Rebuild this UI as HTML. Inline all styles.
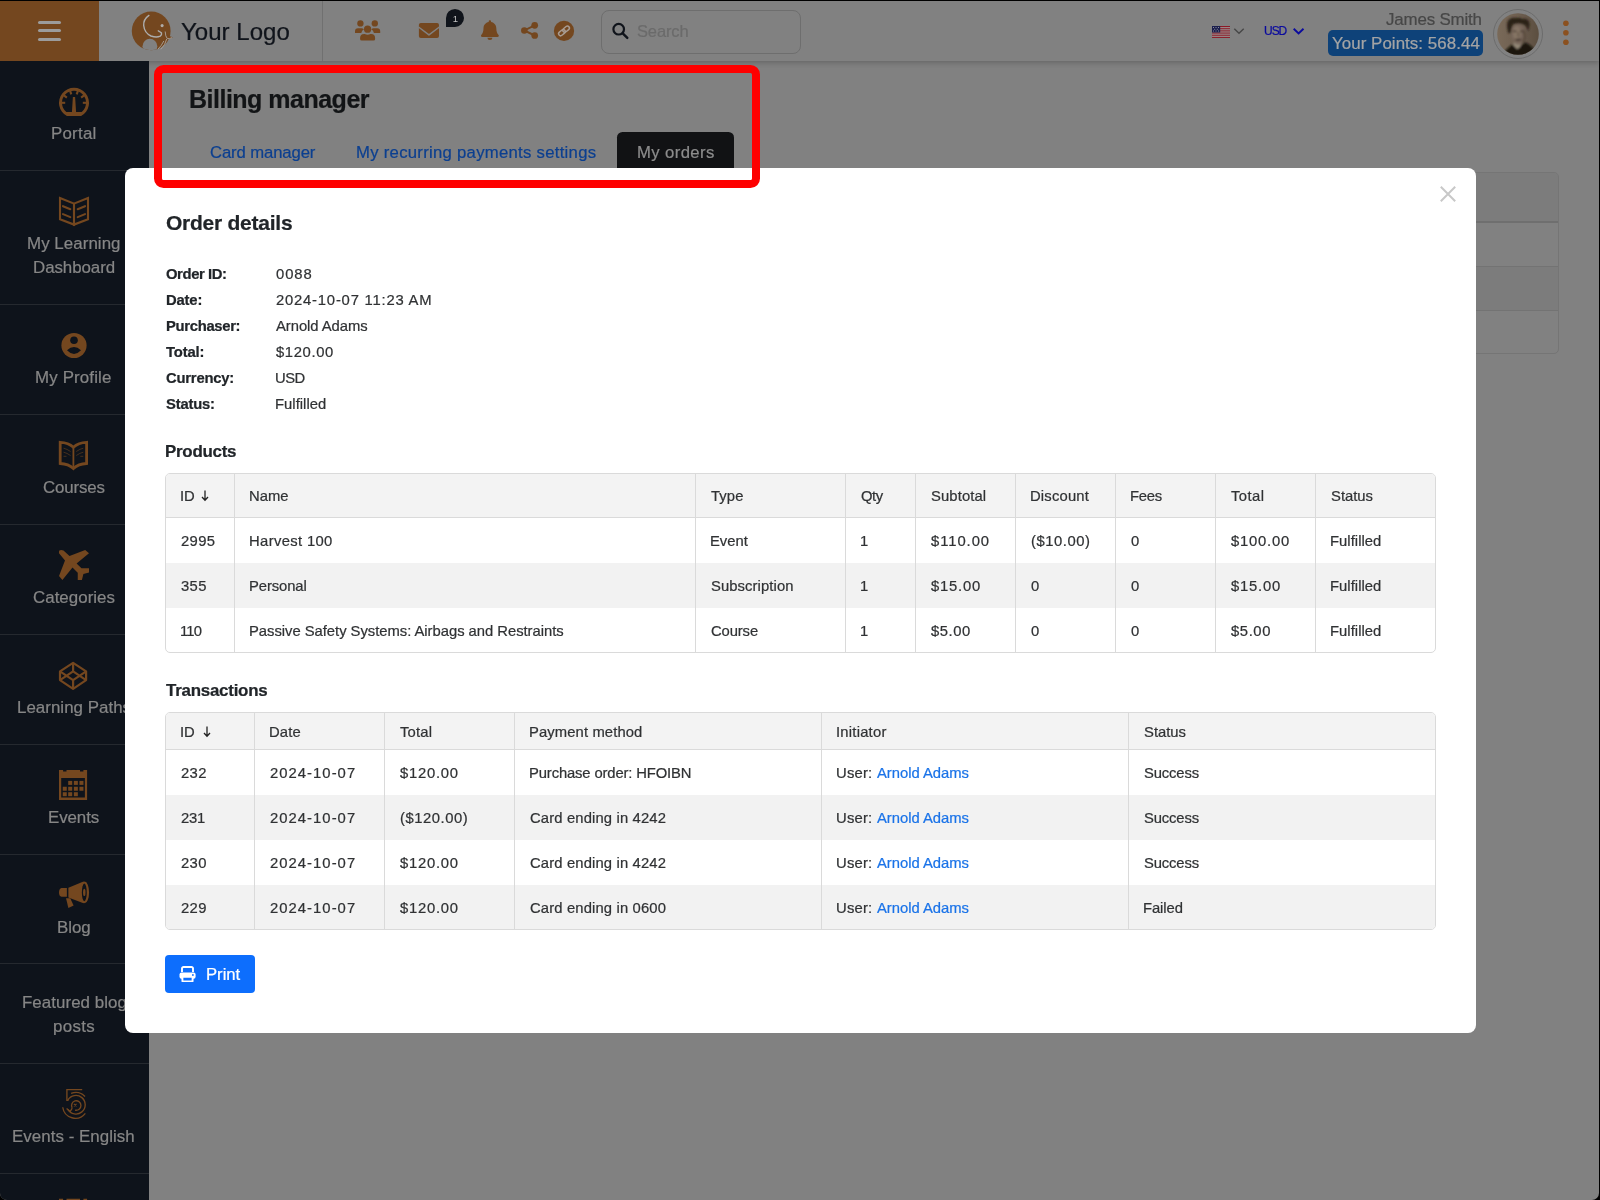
<!DOCTYPE html>
<html lang="en">
<head>
<meta charset="utf-8">
<title>Billing manager - Order details</title>
<style>
*{box-sizing:border-box;margin:0;padding:0}
html,body{width:1600px;height:1200px;overflow:hidden;background:#000}
body{font-family:"Liberation Sans",sans-serif;position:relative}
#frame{position:absolute;left:0;top:1px;width:1599px;height:1199px;background:#818181;overflow:hidden;border-radius:0 0 7px 7px}
.t{position:absolute;white-space:nowrap;line-height:20px;display:block;will-change:transform;-webkit-text-stroke:0.22px currentColor}
</style>
</head>
<body>
<div id="frame">
<!-- header -->
<div style="position:absolute;left:0px;top:0px;width:1599px;height:60px;background:#818181;box-shadow:0 2px 5px rgba(0,0,0,.2)"></div>
<div style="position:absolute;left:0px;top:0px;width:99px;height:60px;background:#74471f"></div>
<div style="position:absolute;left:37.5px;top:20px;width:23.5px;height:3px;background:#9c9c9c;border-radius:1.5px"></div>
<div style="position:absolute;left:37.5px;top:28.2px;width:23.5px;height:3px;background:#9c9c9c;border-radius:1.5px"></div>
<div style="position:absolute;left:37.5px;top:36.6px;width:23.5px;height:3px;background:#9c9c9c;border-radius:1.5px"></div>
<div style="position:absolute;left:321.5px;top:0px;width:1px;height:60px;background:#707070"></div>
<span class="t" id="logo" style="left:180.6px;top:16px;font-size:24px;line-height:30px;letter-spacing:0.025px;color:#10141b;">Your Logo</span>
<div style="position:absolute;left:601px;top:8.5px;width:200px;height:44px;border:1px solid #6e6e6e;border-radius:8px"></div>
<span class="t" id="search" style="left:636.8px;top:20px;font-size:16.5px;letter-spacing:-0.141px;color:#6b6b6b;">Search</span>
<span class="t" id="usd" style="left:1264.4px;top:20px;font-size:12px;letter-spacing:-1.035px;color:#0a0a9e;">USD</span>
<span class="t" id="uname" style="left:1386.4px;top:9px;font-size:16.9px;letter-spacing:-0.162px;color:#474747;">James Smith</span>
<div style="position:absolute;left:1328px;top:29px;width:155px;height:26px;background:#0e4279;border-radius:5px"></div>
<span class="t" id="pts" style="left:1331.8px;top:33px;font-size:16.9px;letter-spacing:0.055px;color:#a4a4a4;">Your Points: 568.44</span>
<!-- sidebar -->
<div style="position:absolute;left:0px;top:60px;width:149px;height:1139px;background:#0e131b"></div>
<div style="position:absolute;left:0px;top:169px;width:149px;height:1px;background:#25292f"></div>
<div style="position:absolute;left:0px;top:303px;width:149px;height:1px;background:#25292f"></div>
<div style="position:absolute;left:0px;top:413px;width:149px;height:1px;background:#25292f"></div>
<div style="position:absolute;left:0px;top:523px;width:149px;height:1px;background:#25292f"></div>
<div style="position:absolute;left:0px;top:633px;width:149px;height:1px;background:#25292f"></div>
<div style="position:absolute;left:0px;top:743px;width:149px;height:1px;background:#25292f"></div>
<div style="position:absolute;left:0px;top:853px;width:149px;height:1px;background:#25292f"></div>
<div style="position:absolute;left:0px;top:962px;width:149px;height:1px;background:#25292f"></div>
<div style="position:absolute;left:0px;top:1061.5px;width:149px;height:1px;background:#25292f"></div>
<div style="position:absolute;left:0px;top:1172px;width:149px;height:1px;background:#25292f"></div>
<span class="t" id="s1" style="left:51px;top:121px;font-size:16.9px;line-height:24px;letter-spacing:0.226px;color:#868686;">Portal</span>
<span class="t" id="s2a" style="left:27px;top:231px;font-size:16.9px;line-height:24px;letter-spacing:0.055px;color:#868686;">My Learning</span>
<span class="t" id="s2b" style="left:32.7px;top:255px;font-size:16.9px;line-height:24px;letter-spacing:-0.067px;color:#868686;">Dashboard</span>
<span class="t" id="s3" style="left:35px;top:365px;font-size:16.9px;line-height:24px;letter-spacing:0.146px;color:#868686;">My Profile</span>
<span class="t" id="s4" style="left:43px;top:475px;font-size:16.9px;line-height:24px;letter-spacing:-0.158px;color:#868686;">Courses</span>
<span class="t" id="s5" style="left:33px;top:585px;font-size:16.9px;line-height:24px;letter-spacing:0.029px;color:#868686;">Categories</span>
<span class="t" id="s6" style="left:16.7px;top:695px;font-size:16.9px;line-height:24px;letter-spacing:0.032px;color:#868686;">Learning Paths</span>
<span class="t" id="s7" style="left:48px;top:805px;font-size:16.9px;line-height:24px;letter-spacing:-0.078px;color:#868686;">Events</span>
<span class="t" id="s8" style="left:56.8px;top:915px;font-size:16.9px;line-height:24px;letter-spacing:-0.071px;color:#868686;">Blog</span>
<span class="t" id="s9a" style="left:21.6px;top:990px;font-size:16.9px;line-height:24px;letter-spacing:0.055px;color:#868686;">Featured blog</span>
<span class="t" id="s9b" style="left:52.9px;top:1014px;font-size:16.9px;line-height:24px;letter-spacing:0.319px;color:#868686;">posts</span>
<span class="t" id="s10" style="left:12px;top:1124px;font-size:16.9px;line-height:24px;letter-spacing:0.043px;color:#868686;">Events - English</span>
<!-- main -->
<span class="t" id="h1" style="left:188.7px;top:82px;font-size:25px;font-weight:700;line-height:32px;letter-spacing:-0.501px;color:#121416;">Billing manager</span>
<span class="t" id="tab1" style="left:209.7px;top:142px;font-size:16.7px;letter-spacing:-0.119px;color:#0b3f90;">Card manager</span>
<span class="t" id="tab2" style="left:356.3px;top:142px;font-size:16.7px;letter-spacing:0.282px;color:#0b3f90;">My recurring payments settings</span>
<div style="position:absolute;left:617px;top:131px;width:117px;height:40px;background:#111214;border-radius:5.500px 5.500px 0 0"></div>
<span class="t" id="tab3" style="left:636.5px;top:142px;font-size:16.7px;letter-spacing:0.395px;color:#8c8c8c;">My orders</span>
<div style="position:absolute;left:1300px;top:171px;width:259px;height:181.5px;border:1px solid #757575;border-radius:5px;background:#818181;overflow:hidden"><div style="position:absolute;left:0;top:0;width:258px;height:48px;background:#7c7c7c"></div><div style="position:absolute;left:0;top:48px;width:258px;height:2px;background:#6f6f6f"></div><div style="position:absolute;left:0;top:92.600px;width:258px;height:1px;background:#737373"></div><div style="position:absolute;left:0;top:93.600px;width:258px;height:43px;background:#7c7c7c"></div><div style="position:absolute;left:0;top:136.600px;width:258px;height:1px;background:#737373"></div></div>
<!-- modal -->
<div style="position:absolute;left:125px;top:167px;width:1351px;height:865px;background:#fff;border-radius:8px"></div>
<svg width="16" height="16" viewBox="0 0 16 16" style="position:absolute;left:1439.500px;top:185.100px"><path d="M0.800 0.800L15.200 15.200M15.200 0.800L0.800 15.200" stroke="#c8c8c8" stroke-width="2" fill="none"/></svg>
<span class="t" id="od" style="left:165.6px;top:210px;font-size:21px;font-weight:700;line-height:24px;letter-spacing:-0.247px;color:#212529;">Order details</span>
<span class="t" id="dk0" style="left:165.6px;top:263px;font-size:14.8px;font-weight:700;letter-spacing:-0.388px;color:#212529;">Order ID:</span>
<span class="t" id="dv0" style="left:275.5px;top:263px;font-size:14.8px;letter-spacing:0.904px;color:#303234;">0088</span>
<span class="t" id="dk1" style="left:165.6px;top:289px;font-size:14.8px;font-weight:700;letter-spacing:-0.168px;color:#212529;">Date:</span>
<span class="t" id="dv1" style="left:275.5px;top:289px;font-size:14.8px;letter-spacing:0.799px;color:#303234;">2024-10-07 11:23 AM</span>
<span class="t" id="dk2" style="left:165.6px;top:315px;font-size:14.8px;font-weight:700;letter-spacing:-0.309px;color:#212529;">Purchaser:</span>
<span class="t" id="dv2" style="left:275.5px;top:315px;font-size:14.8px;letter-spacing:-0.049px;color:#303234;">Arnold Adams</span>
<span class="t" id="dk3" style="left:165.6px;top:341px;font-size:14.8px;font-weight:700;letter-spacing:-0.129px;color:#212529;">Total:</span>
<span class="t" id="dv3" style="left:275.5px;top:341px;font-size:14.8px;letter-spacing:0.640px;color:#303234;">$120.00</span>
<span class="t" id="dk4" style="left:165.6px;top:367px;font-size:14.8px;font-weight:700;letter-spacing:-0.208px;color:#212529;">Currency:</span>
<span class="t" id="dv4" style="left:274.5px;top:367px;font-size:14.8px;letter-spacing:-0.478px;color:#303234;">USD</span>
<span class="t" id="dk5" style="left:165.6px;top:393px;font-size:14.8px;font-weight:700;letter-spacing:-0.187px;color:#212529;">Status:</span>
<span class="t" id="dv5" style="left:274.5px;top:393px;font-size:14.8px;letter-spacing:0.030px;color:#303234;">Fulfilled</span>
<span class="t" id="hp" style="left:164.6px;top:441px;font-size:16.9px;font-weight:700;letter-spacing:-0.259px;color:#212529;">Products</span>
<span class="t" id="ht" style="left:166px;top:680px;font-size:16.9px;font-weight:700;letter-spacing:-0.228px;color:#212529;">Transactions</span>
<div style="position:absolute;left:165px;top:472px;width:1271px;height:180px;border:1px solid #dadada;border-radius:5px;background:#fff;overflow:hidden"><div style="position:absolute;left:0;top:0;width:1271px;height:43px;background:#f3f3f3"></div><div style="position:absolute;left:0;top:43px;width:1271px;height:1px;background:#dadada"></div><div style="position:absolute;left:0;top:89px;width:1271px;height:45px;background:#f2f2f2"></div><div style="position:absolute;left:68px;top:0;width:1px;height:180px;background:#dadada"></div><div style="position:absolute;left:529px;top:0;width:1px;height:180px;background:#dadada"></div><div style="position:absolute;left:679px;top:0;width:1px;height:180px;background:#dadada"></div><div style="position:absolute;left:749px;top:0;width:1px;height:180px;background:#dadada"></div><div style="position:absolute;left:849px;top:0;width:1px;height:180px;background:#dadada"></div><div style="position:absolute;left:949px;top:0;width:1px;height:180px;background:#dadada"></div><div style="position:absolute;left:1049px;top:0;width:1px;height:180px;background:#dadada"></div><div style="position:absolute;left:1149px;top:0;width:1px;height:180px;background:#dadada"></div></div>
<span class="t" id="ph0" style="left:179.5px;top:485px;font-size:14.8px;letter-spacing:-0.111px;color:#303234;">ID</span>
<span class="t" id="ph1" style="left:249.3px;top:485px;font-size:14.8px;letter-spacing:-0.014px;color:#303234;">Name</span>
<span class="t" id="ph2" style="left:711.3px;top:485px;font-size:14.8px;letter-spacing:0.117px;color:#303234;">Type</span>
<span class="t" id="ph3" style="left:861.3px;top:485px;font-size:14.8px;letter-spacing:-0.410px;color:#303234;">Qty</span>
<span class="t" id="ph4" style="left:931.3px;top:485px;font-size:14.8px;letter-spacing:0.113px;color:#303234;">Subtotal</span>
<span class="t" id="ph5" style="left:1030.3px;top:485px;font-size:14.8px;letter-spacing:0.177px;color:#303234;">Discount</span>
<span class="t" id="ph6" style="left:1130.3px;top:485px;font-size:14.8px;letter-spacing:-0.232px;color:#303234;">Fees</span>
<span class="t" id="ph7" style="left:1231.3px;top:485px;font-size:14.8px;letter-spacing:0.458px;color:#303234;">Total</span>
<span class="t" id="ph8" style="left:1331.3px;top:485px;font-size:14.8px;letter-spacing:0.010px;color:#303234;">Status</span>
<span class="t" id="pr0c0" style="left:180.5px;top:530px;font-size:14.8px;letter-spacing:0.337px;color:#303234;">2995</span>
<span class="t" id="pr0c1" style="left:249.3px;top:530px;font-size:14.8px;letter-spacing:0.355px;color:#303234;">Harvest 100</span>
<span class="t" id="pr0c2" style="left:710.3px;top:530px;font-size:14.8px;letter-spacing:-0.007px;color:#303234;">Event</span>
<span class="t" id="pr0c3" style="left:860.3px;top:530px;font-size:14.8px;color:#303234;">1</span>
<span class="t" id="pr0c4" style="left:931.3px;top:530px;font-size:14.8px;letter-spacing:0.940px;color:#303234;">$110.00</span>
<span class="t" id="pr0c5" style="left:1031.3px;top:530px;font-size:14.8px;letter-spacing:0.545px;color:#303234;">($10.00)</span>
<span class="t" id="pr0c6" style="left:1131.3px;top:530px;font-size:14.8px;color:#303234;">0</span>
<span class="t" id="pr0c7" style="left:1231.3px;top:530px;font-size:14.8px;letter-spacing:0.774px;color:#303234;">$100.00</span>
<span class="t" id="pr0c8" style="left:1330.3px;top:530px;font-size:14.8px;letter-spacing:0.043px;color:#303234;">Fulfilled</span>
<span class="t" id="pr1c0" style="left:180.5px;top:575px;font-size:14.8px;letter-spacing:0.371px;color:#303234;">355</span>
<span class="t" id="pr1c1" style="left:249.3px;top:575px;font-size:14.8px;letter-spacing:-0.088px;color:#303234;">Personal</span>
<span class="t" id="pr1c2" style="left:711.3px;top:575px;font-size:14.8px;letter-spacing:0.091px;color:#303234;">Subscription</span>
<span class="t" id="pr1c3" style="left:860.3px;top:575px;font-size:14.8px;color:#303234;">1</span>
<span class="t" id="pr1c4" style="left:931.3px;top:575px;font-size:14.8px;letter-spacing:0.774px;color:#303234;">$15.00</span>
<span class="t" id="pr1c5" style="left:1031.3px;top:575px;font-size:14.8px;color:#303234;">0</span>
<span class="t" id="pr1c6" style="left:1131.3px;top:575px;font-size:14.8px;color:#303234;">0</span>
<span class="t" id="pr1c7" style="left:1231.3px;top:575px;font-size:14.8px;letter-spacing:0.794px;color:#303234;">$15.00</span>
<span class="t" id="pr1c8" style="left:1330.3px;top:575px;font-size:14.8px;letter-spacing:0.043px;color:#303234;">Fulfilled</span>
<span class="t" id="pr2c0" style="left:179.5px;top:620px;font-size:14.8px;letter-spacing:-0.780px;color:#303234;">110</span>
<span class="t" id="pr2c1" style="left:249.3px;top:620px;font-size:14.8px;letter-spacing:-0.025px;color:#303234;">Passive Safety Systems: Airbags and Restraints</span>
<span class="t" id="pr2c2" style="left:711.3px;top:620px;font-size:14.8px;letter-spacing:-0.114px;color:#303234;">Course</span>
<span class="t" id="pr2c3" style="left:860.3px;top:620px;font-size:14.8px;color:#303234;">1</span>
<span class="t" id="pr2c4" style="left:931.3px;top:620px;font-size:14.8px;letter-spacing:0.575px;color:#303234;">$5.00</span>
<span class="t" id="pr2c5" style="left:1031.3px;top:620px;font-size:14.8px;color:#303234;">0</span>
<span class="t" id="pr2c6" style="left:1131.3px;top:620px;font-size:14.8px;color:#303234;">0</span>
<span class="t" id="pr2c7" style="left:1231.3px;top:620px;font-size:14.8px;letter-spacing:0.600px;color:#303234;">$5.00</span>
<span class="t" id="pr2c8" style="left:1330.3px;top:620px;font-size:14.8px;letter-spacing:0.043px;color:#303234;">Fulfilled</span>
<div style="position:absolute;left:165px;top:711px;width:1271px;height:218px;border:1px solid #dadada;border-radius:5px;background:#fff;overflow:hidden"><div style="position:absolute;left:0;top:0;width:1271px;height:36px;background:#f3f3f3"></div><div style="position:absolute;left:0;top:36px;width:1271px;height:1px;background:#dadada"></div><div style="position:absolute;left:0;top:82px;width:1271px;height:45px;background:#f2f2f2"></div><div style="position:absolute;left:0;top:172px;width:1271px;height:45px;background:#f2f2f2"></div><div style="position:absolute;left:88px;top:0;width:1px;height:218px;background:#dadada"></div><div style="position:absolute;left:218px;top:0;width:1px;height:218px;background:#dadada"></div><div style="position:absolute;left:348px;top:0;width:1px;height:218px;background:#dadada"></div><div style="position:absolute;left:655px;top:0;width:1px;height:218px;background:#dadada"></div><div style="position:absolute;left:962px;top:0;width:1px;height:218px;background:#dadada"></div></div>
<span class="t" id="th0" style="left:179.5px;top:721px;font-size:14.8px;letter-spacing:-0.111px;color:#303234;">ID</span>
<span class="t" id="th1" style="left:269.3px;top:721px;font-size:14.8px;letter-spacing:0.125px;color:#303234;">Date</span>
<span class="t" id="th2" style="left:400.3px;top:721px;font-size:14.8px;letter-spacing:0.183px;color:#303234;">Total</span>
<span class="t" id="th3" style="left:529.3px;top:721px;font-size:14.8px;letter-spacing:0.113px;color:#303234;">Payment method</span>
<span class="t" id="th4" style="left:836.3px;top:721px;font-size:14.8px;letter-spacing:0.226px;color:#303234;">Initiator</span>
<span class="t" id="th5" style="left:1144.3px;top:721px;font-size:14.8px;letter-spacing:0.010px;color:#303234;">Status</span>
<span class="t" id="tr0c0" style="left:180.5px;top:762px;font-size:14.8px;letter-spacing:0.371px;color:#303234;">232</span>
<span class="t" id="tr0c1" style="left:270.3px;top:762px;font-size:14.8px;letter-spacing:1.049px;color:#303234;">2024-10-07</span>
<span class="t" id="tr0c2" style="left:400.3px;top:762px;font-size:14.8px;letter-spacing:0.740px;color:#303234;">$120.00</span>
<span class="t" id="tr0c3" style="left:529.3px;top:762px;font-size:14.8px;letter-spacing:-0.133px;color:#303234;">Purchase order: HFOIBN</span>
<span class="t" id="tr0c4a" style="left:836.3px;top:762px;font-size:14.8px;letter-spacing:0.215px;color:#303234;">User:</span>
<span class="t" id="tr0c4b" style="left:877.3px;top:762px;font-size:14.8px;letter-spacing:-0.022px;color:#1a73e8;">Arnold Adams</span>
<span class="t" id="tr0c5" style="left:1144.3px;top:762px;font-size:14.8px;letter-spacing:-0.137px;color:#303234;">Success</span>
<span class="t" id="tr1c0" style="left:180.5px;top:807px;font-size:14.8px;letter-spacing:-0.229px;color:#303234;">231</span>
<span class="t" id="tr1c1" style="left:270.3px;top:807px;font-size:14.8px;letter-spacing:1.049px;color:#303234;">2024-10-07</span>
<span class="t" id="tr1c2" style="left:400.3px;top:807px;font-size:14.8px;letter-spacing:0.548px;color:#303234;">($120.00)</span>
<span class="t" id="tr1c3" style="left:530.3px;top:807px;font-size:14.8px;letter-spacing:0.148px;color:#303234;">Card ending in 4242</span>
<span class="t" id="tr1c4a" style="left:836.3px;top:807px;font-size:14.8px;letter-spacing:0.215px;color:#303234;">User:</span>
<span class="t" id="tr1c4b" style="left:877.3px;top:807px;font-size:14.8px;letter-spacing:-0.022px;color:#1a73e8;">Arnold Adams</span>
<span class="t" id="tr1c5" style="left:1144.3px;top:807px;font-size:14.8px;letter-spacing:-0.137px;color:#303234;">Success</span>
<span class="t" id="tr2c0" style="left:180.5px;top:852px;font-size:14.8px;letter-spacing:0.371px;color:#303234;">230</span>
<span class="t" id="tr2c1" style="left:270.3px;top:852px;font-size:14.8px;letter-spacing:1.049px;color:#303234;">2024-10-07</span>
<span class="t" id="tr2c2" style="left:400.3px;top:852px;font-size:14.8px;letter-spacing:0.740px;color:#303234;">$120.00</span>
<span class="t" id="tr2c3" style="left:530.3px;top:852px;font-size:14.8px;letter-spacing:0.148px;color:#303234;">Card ending in 4242</span>
<span class="t" id="tr2c4a" style="left:836.3px;top:852px;font-size:14.8px;letter-spacing:0.215px;color:#303234;">User:</span>
<span class="t" id="tr2c4b" style="left:877.3px;top:852px;font-size:14.8px;letter-spacing:-0.022px;color:#1a73e8;">Arnold Adams</span>
<span class="t" id="tr2c5" style="left:1144.3px;top:852px;font-size:14.8px;letter-spacing:-0.137px;color:#303234;">Success</span>
<span class="t" id="tr3c0" style="left:180.5px;top:897px;font-size:14.8px;letter-spacing:0.371px;color:#303234;">229</span>
<span class="t" id="tr3c1" style="left:270.3px;top:897px;font-size:14.8px;letter-spacing:1.049px;color:#303234;">2024-10-07</span>
<span class="t" id="tr3c2" style="left:400.3px;top:897px;font-size:14.8px;letter-spacing:0.740px;color:#303234;">$120.00</span>
<span class="t" id="tr3c3" style="left:530.3px;top:897px;font-size:14.8px;letter-spacing:0.148px;color:#303234;">Card ending in 0600</span>
<span class="t" id="tr3c4a" style="left:836.3px;top:897px;font-size:14.8px;letter-spacing:0.215px;color:#303234;">User:</span>
<span class="t" id="tr3c4b" style="left:877.3px;top:897px;font-size:14.8px;letter-spacing:-0.022px;color:#1a73e8;">Arnold Adams</span>
<span class="t" id="tr3c5" style="left:1143.3px;top:897px;font-size:14.8px;letter-spacing:-0.074px;color:#303234;">Failed</span>
<svg width="8" height="12" viewBox="0 0 8 12" style="position:absolute;left:200.7px;top:489px"><path d="M4 0.500V10M1 7L4 10.300L7 7" fill="none" stroke="#222" stroke-width="1.300"/></svg>
<svg width="8" height="12" viewBox="0 0 8 12" style="position:absolute;left:202.7px;top:724.5px"><path d="M4 0.500V10M1 7L4 10.300L7 7" fill="none" stroke="#222" stroke-width="1.300"/></svg>
<div style="position:absolute;left:165px;top:954px;width:90px;height:38px;background:#0d6efd;border-radius:4px"></div>
<span class="t" id="print" style="left:206px;top:964px;font-size:16.7px;letter-spacing:-0.019px;color:#fff;">Print</span>
<svg width="17" height="17" viewBox="0 0 17 17" style="position:absolute;left:179.400px;top:963.700px"><path d="M3 7V3.500A1.500 1.500 0 0 1 4.500 2H12.500A1.500 1.500 0 0 1 14 3.500V7" fill="none" stroke="#fff" stroke-width="1.900"/><rect x="0.500" y="7.400" width="16.100" height="6.300" rx="2" fill="#fff"/><rect x="3.400" y="11.700" width="10.200" height="4.800" rx="0.600" fill="#0d6efd" stroke="#fff" stroke-width="1.900"/><circle cx="13.900" cy="10" r="0.900" fill="#0d6efd"/></svg>
<svg id="ico" width="1600" height="1200" viewBox="0 0 1600 1200" style="position:absolute;left:0;top:-1px;pointer-events:none">
<g fill="#74471f">
<!-- logo elephant -->
<circle cx="151.200" cy="30.900" r="19.400"/>
<path d="M165 30Q166.500 36 172.800 37.300Q168.500 40.500 165.500 38.500Q163.500 36 163.800 31Z"/>
<!-- users -->
<circle cx="360.4" cy="23.4" r="3.15"/><circle cx="374.8" cy="23.4" r="3.15"/><circle cx="367.6" cy="29.2" r="3.65"/>
<path d="M355 32.9V31.3A3 3 0 0 1 358 28.3H361.5Q363 28.4 363.9 29.3Q361.8 30.6 361.3 32.9Z"/>
<path d="M380.2 32.9V31.3A3 3 0 0 0 377.2 28.3H373.7Q372.2 28.4 371.3 29.3Q373.4 30.6 373.9 32.9Z"/>
<path d="M360.1 38.9V38A4 4 0 0 1 364.1 34.1H364.7Q367.6 35.4 370.5 34.1H371.1A4 4 0 0 1 375.1 38V38.9A1.5 1.5 0 0 1 373.6 40.4H361.6A1.5 1.5 0 0 1 360.1 38.9Z"/>
<!-- envelope -->
<rect x="418.9" y="22.9" width="20.1" height="15.1" rx="1.9"/>
<!-- bell -->
<path d="M489.9 20.300a1.200 1.200 0 0 1 1.200 1.200v.6c3.100 .6 5.200 3 5.200 6.200c0 3.600 .9 5.200 2.100 6.400c.9 .9 .3 2.200 -.9 2.200h-15.200c-1.200 0 -1.800 -1.300 -.9 -2.200c1.200 -1.200 2.100 -2.800 2.100 -6.400c0 -3.200 2.100 -5.600 5.200 -6.200v-.6a1.200 1.200 0 0 1 1.200 -1.200z"/>
<path d="M487.400 37.700a2.500 2.400 0 0 0 5 0z"/>
<!-- share -->
<circle cx="524.300" cy="30.400" r="3.250"/><circle cx="534.700" cy="25.300" r="3.350"/><circle cx="534.700" cy="35.500" r="3.350"/>
<path d="M534.700 25.300L524.300 30.400L534.700 35.500" fill="none" stroke="#74471f" stroke-width="2"/>
<!-- link circle -->
<circle cx="564" cy="30.900" r="10.150"/>
</g>
<!-- sidebar icons -->
<g fill="#74471f">
<path fill-rule="evenodd" d="M66.9 116A15 15 0 1 1 81.1 116ZM66.3 112A12 12 0 1 1 81.7 112Z"/>
<path d="M72.9 96.9H75.1L76.1 112.5H71.9Z"/>
<path d="M65.20 102.80L61.50 102.80" stroke="#74471f" stroke-width="2.1"/>
<path d="M66.88 97.63L63.89 95.45" stroke="#74471f" stroke-width="2.1"/>
<path d="M71.28 94.43L70.14 90.91" stroke="#74471f" stroke-width="2.1"/>
<path d="M76.72 94.43L77.86 90.91" stroke="#74471f" stroke-width="2.1"/>
<path d="M81.12 97.63L84.11 95.45" stroke="#74471f" stroke-width="2.1"/>
<path d="M82.80 102.80L86.50 102.80" stroke="#74471f" stroke-width="2.1"/>
<g fill="none" stroke="#74471f" stroke-width="2.1" stroke-linejoin="miter"><path d="M60 198L74 203.6V224.600L60 219.200Z"/><path d="M88 198L74 203.6V224.600L88 219.200Z"/><path stroke-linecap="round" d="M63 206.200L70.300 209.200M63 214.100L70.300 217.100M85 206.200L77.700 209.200M85 214.100L77.700 217.100"/></g>
<circle cx="74" cy="345.500" r="12.600"/><circle cx="74" cy="340.300" r="3.800" fill="#0e131b"/><path d="M67 350.300Q74 343.600 81 350.300Q74 357.700 67 350.300Z" fill="#0e131b"/>
<g fill="none" stroke="#74471f"><path stroke-width="2.800" d="M60.200 442.300Q68.500 442.500 73.400 447.300Q78.300 442.500 86.600 442.300V463.500Q78.300 463.800 73.400 468.600Q68.500 463.800 60.200 463.500Z"/><path stroke-width="1.800" d="M73.400 447.300V468.600"/><path stroke-width="0.800" opacity="0.700" d="M63.500 448.200Q67 449 70.500 451.500M63.500 452.200Q67 453 70.500 455.500M63.500 456.300H66.500M83.300 448.200Q79.800 449 76.300 451.500M83.300 452.200Q79.800 453 76.300 455.500M83.300 456.300H80.300"/></g>
<path d="M59 551.6L59.3 550.6L61.2 549.9L63.5 550.4L69.5 555.9L85.2 549.9L89 553.2L76.6 563.4L81.5 568.2L89 568.2L89 572.4L83.4 573.9L81.9 579.9L77.75 579.9L77.75 572.7L72.5 567.5L62.4 579.9L59 576.1L65 560.4L59 553.2Z"/>
<g fill="none" stroke="#74471f" stroke-width="2.200" stroke-linejoin="round"><path d="M73.100 662.800L86.100 671.300V680.100L73.100 688.900L60 680.100V671.300Z"/><path d="M60 671.300L73.100 680.100L86.100 671.300M60 680.100L73.100 671.300L86.100 680.100M73.100 662.800V671.300M73.100 680.100V688.900"/></g>
<path fill-rule="evenodd" d="M59 769.9H63.100V771.5H66.500V769.9H80V771.5H83.400V769.9H87.100V800.0H59ZM61.200 777.9H84.900V797.6H61.200Z"/><rect x="68.2" y="780.90" width="4" height="4"/><rect x="73.85" y="780.90" width="4" height="4"/><rect x="79.45" y="780.90" width="4" height="4"/><rect x="62.75" y="786.75" width="4" height="4"/><rect x="68.2" y="786.75" width="4" height="4"/><rect x="73.85" y="786.75" width="4" height="4"/><rect x="79.45" y="786.75" width="4" height="4"/><rect x="62.75" y="792.20" width="4" height="4"/><rect x="68.2" y="792.20" width="4" height="4"/><rect x="73.85" y="792.20" width="4" height="4"/>
<path fill-rule="evenodd" d="M59 1198.7H63.100V1200.3H66.500V1198.7H80V1200.3H83.400V1198.7H87.100V1228.8H59ZM61.200 1206.7H84.900V1226.4H61.200Z"/><rect x="68.2" y="1209.70" width="4" height="4"/><rect x="73.85" y="1209.70" width="4" height="4"/><rect x="79.45" y="1209.70" width="4" height="4"/><rect x="62.75" y="1215.55" width="4" height="4"/><rect x="68.2" y="1215.55" width="4" height="4"/><rect x="73.85" y="1215.55" width="4" height="4"/><rect x="79.45" y="1215.55" width="4" height="4"/><rect x="62.75" y="1221.00" width="4" height="4"/><rect x="68.2" y="1221.00" width="4" height="4"/><rect x="73.85" y="1221.00" width="4" height="4"/>
<path d="M61.500 888.100H66.900V896.750H61.500Q59 896 59 892.400Q59 889 61.500 888.100Z"/><path d="M68.400 887.700L83.500 881.600A4.300 10.900 0 0 1 83.500 903.300L68.400 897.500Z"/><ellipse cx="84.700" cy="892.400" rx="4.350" ry="10.900"/><ellipse cx="84.300" cy="892.400" rx="2.450" ry="8.800" fill="#0e131b"/><ellipse cx="84.300" cy="892.400" rx="1.250" ry="3.600"/><path d="M66 898.250H70.250L73.600 905.400L68.400 908Z"/>
<g fill="none" stroke="#74471f" stroke-width="1.350"><path d="M82.200 1089.600H66.900V1100.400H68.500"/><path d="M67.85 1100.10A9.3 9.3 0 1 1 67.85 1109.40"/><path d="M71.09 1093.43A12.3 12.3 0 0 1 85.04 1096.52"/><path d="M85.31 1113.32A12.7 12.7 0 0 1 62.72 1107.27"/><path d="M72.18 1107.85A4.7 4.7 0 1 1 75.03 1110.04"/><path d="M72.200 1108.200L70.200 1111.500L66.600 1108.400"/><path stroke-width="1.100" d="M73.900 1103.800L76.500 1106.400M76.500 1103.800L73.900 1106.400"/></g>
</g>
<!-- elephant details -->
<clipPath id="lc"><circle cx="151.200" cy="30.900" r="19.400"/></clipPath>
<circle cx="149.900" cy="46.200" r="7.400" fill="#818181" clip-path="url(#lc)"/>
<path d="M148.900 15.400Q143.200 19.500 143.700 25.500Q144.500 33 151 36Q156.500 38 160.200 36.200Q162 35 161.500 33Q160.500 31.800 158.300 30.800" fill="none" stroke="#adadad" stroke-width="1.400" stroke-linecap="round"/>
<path d="M165.200 31.500Q165.300 36.500 167.300 38.600Q169.500 39 172 37.600" fill="none" stroke="#a9a39c" stroke-width="0.900"/>
<path d="M166.700 39Q165.500 44.500 160.800 49.300M163.800 41Q161.500 46 158 49" fill="none" stroke="#a9a39c" stroke-width="0.900"/>
<circle cx="162.100" cy="25.600" r="1.550" fill="#b0aca8"/>
<!-- envelope V -->
<path d="M418.500 27L428.950 34.900L439.400 27" fill="none" stroke="#818181" stroke-width="1.500" stroke-linejoin="round"/>
<!-- badge -->
<path d="M446 26.900V17.900A9 9 0 0 1 464 17.900A9 9 0 0 1 455 26.900Z" fill="#10141b"/>
<text x="455.400" y="21.900" font-family="Liberation Sans, sans-serif" font-size="9.500" fill="#c2c2c2" text-anchor="middle">1</text>
<!-- link glyph -->
<g fill="none" stroke="#a89c92" stroke-width="1.500" transform="rotate(-40 564 30.900)">
<rect x="557.600" y="28.900" width="7.400" height="4" rx="2"/>
<rect x="563" y="28.900" width="7.400" height="4" rx="2"/>
</g>
<!-- magnifier -->
<circle cx="618.700" cy="29.200" r="5.300" fill="none" stroke="#10141b" stroke-width="2.200"/>
<path d="M622.700 33.300L627.300 37.900" stroke="#10141b" stroke-width="2.400" stroke-linecap="round"/>
<!-- flag -->
<g>
<rect x="1212" y="26" width="18" height="12" fill="#9a9a9a"/>
<g fill="#8c1a26"><rect x="1212" y="26" width="18" height="1"/><rect x="1212" y="27.850" width="18" height="0.950"/><rect x="1212" y="29.700" width="18" height="0.950"/><rect x="1212" y="31.550" width="18" height="0.950"/><rect x="1212" y="33.400" width="18" height="0.950"/><rect x="1212" y="35.250" width="18" height="0.950"/><rect x="1212" y="37.050" width="18" height="0.950"/></g>
<rect x="1212" y="26" width="8.200" height="6.500" fill="#1b1f4d"/>
<g fill="#8a8a9a"><rect x="1213" y="27" width="1" height="1"/><rect x="1215.500" y="27" width="1" height="1"/><rect x="1218" y="27" width="1" height="1"/><rect x="1214.200" y="28.800" width="1" height="1"/><rect x="1216.800" y="28.800" width="1" height="1"/><rect x="1213" y="30.500" width="1" height="1"/><rect x="1215.500" y="30.500" width="1" height="1"/><rect x="1218" y="30.500" width="1" height="1"/></g>
</g>
<path d="M1234.300 28.800L1239 33.300L1243.700 28.800" fill="none" stroke="#474747" stroke-width="1.400"/>
<path d="M1293.700 28.800L1298.600 33.400L1303.500 28.800" fill="none" stroke="#0a0a9e" stroke-width="1.900"/>
<!-- avatar -->
<defs><clipPath id="avc"><circle cx="1518" cy="34" r="20.800"/></clipPath>
<filter id="avb" x="-20%" y="-20%" width="140%" height="140%"><feGaussianBlur stdDeviation="1"/></filter>
<linearGradient id="avg" x1="0" x2="1" y1="0" y2="0"><stop offset="0" stop-color="#7a6a59"/><stop offset="0.500" stop-color="#6e5f50"/><stop offset="1" stop-color="#5a4d3f"/></linearGradient></defs>
<circle cx="1518" cy="34" r="24.500" fill="none" stroke="#6c6c6c" stroke-width="1"/>
<g clip-path="url(#avc)">
<rect x="1496" y="12" width="44" height="44" fill="url(#avg)"/>
<g filter="url(#avb)">
<path d="M1499 58L1505.500 50.500Q1509.500 46.500 1512.700 44L1517 49L1525.200 42Q1530 44.500 1533.500 48.500L1538 58Z" fill="#1c1610"/>
<path d="M1513 45L1514 42.500H1521L1520.500 46.500L1517.300 49.300Z" fill="#958a79"/>
<ellipse cx="1518.500" cy="34.500" rx="7.200" ry="10.300" fill="#77665a"/>
<ellipse cx="1516.800" cy="33" rx="4" ry="7" fill="#857465"/>
<path d="M1508.300 33Q1506 25 1508 20.500Q1511 17 1515.500 18Q1519 17.300 1522.500 19Q1526 18 1528.500 20.500Q1531 25 1527.800 31.500Q1527.600 27 1525 25Q1519.500 22.800 1513.500 24Q1511 27 1510.800 33Q1509 33.500 1508.300 33Z" fill="#2a2018"/>
<path d="M1514.300 39.500Q1518.300 38 1522.300 39.500Q1518.300 41.800 1514.300 39.500Z" fill="#33271d"/>
<path d="M1512.800 31.300H1516.500M1520 31.300H1523.500" stroke="#40332a" stroke-width="1.300"/>
<path d="M1518.300 32V37" stroke="#5e4f40" stroke-width="1.200"/>
<path d="M1523 30Q1526.500 36 1523 43" stroke="#5a4b3e" stroke-width="2.500" fill="none"/>
</g></g>
<!-- kebab -->
<g fill="#8b5120"><circle cx="1565.900" cy="23.300" r="2.800"/><circle cx="1565.900" cy="32.700" r="2.800"/><circle cx="1565.900" cy="42.200" r="2.800"/></g>
</svg>
<div style="position:absolute;left:154.3px;top:64px;width:605.4px;height:123.4px;border:8.300px solid #fe0000;border-radius:9.500px"></div>
</div>
</body>
</html>
